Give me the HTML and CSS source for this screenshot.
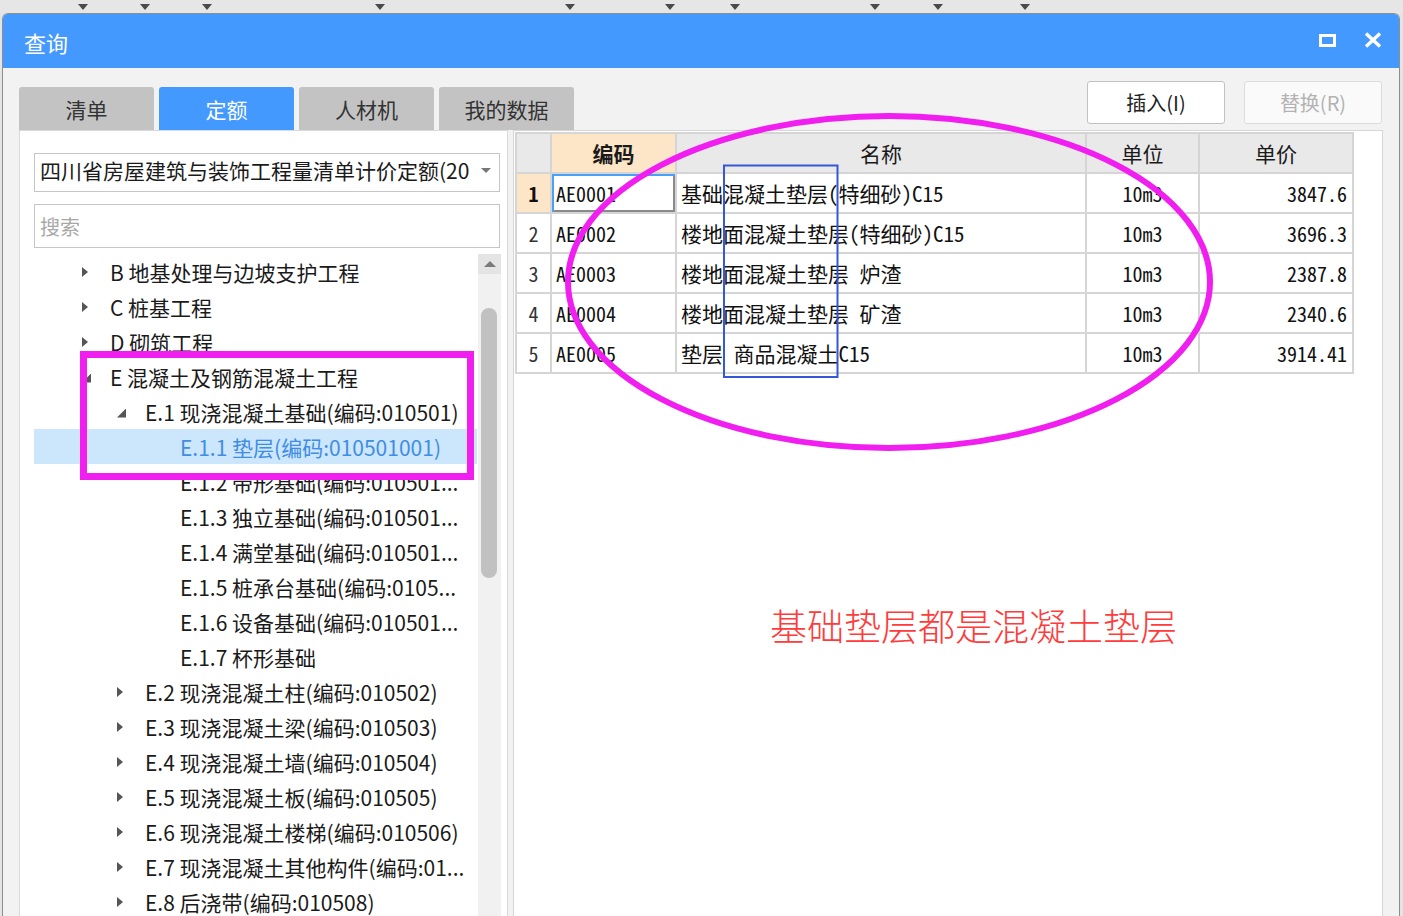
FILE: index.html
```html
<!DOCTYPE html>
<html lang="zh-CN">
<head>
<meta charset="utf-8">
<title>查询</title>
<link rel="stylesheet" href="styles.css">
</head>
<body>
<div class="strip">
  <span class="cell"><i class="tri"></i></span>
  <span class="cell"><i class="tri"></i></span>
  <span class="cell"><i class="tri"></i></span>
  <span class="cell"><i class="tri"></i></span>
  <span class="cell"><i class="tri"></i></span>
  <span class="cell"><i class="tri"></i></span>
  <span class="cell"><i class="tri"></i></span>
  <span class="cell"><i class="tri"></i></span>
  <span class="cell"><i class="tri"></i></span>
  <span class="cell"><i class="tri"></i></span>
</div>
<div class="dialog">
  <div class="titlebar">
    <span class="title">查询</span>
    <div class="winbtns">
      <span class="maxbtn"></span>
      <svg class="closebtn" width="18" height="16" viewBox="0 0 18 16"><path d="M2 1.5 L16 14.5 M16 1.5 L2 14.5" stroke="#fff" stroke-width="3.4" fill="none"/></svg>
    </div>
  </div>
  <div class="body">
    <div class="toolbar">
      <div class="tabs">
        <div class="tab">清单</div>
        <div class="tab active">定额</div>
        <div class="tab">人材机</div>
        <div class="tab">我的数据</div>
      </div>
      <div class="actions">
        <button class="btn">插入(I)</button>
        <button class="btn disabled">替换(R)</button>
      </div>
    </div>
    <div class="panels">
      <div class="left">
        <div class="select"><span class="seltext">四川省房屋建筑与装饰工程量清单计价定额(20</span><i class="caret"></i></div>
        <div class="search">搜索</div>
        <div class="treewrap">
          <div class="tree">
            <div class="row l1"><span class="tw"><i class="arr-r"></i></span><span class="label">B 地基处理与边坡支护工程</span></div>
            <div class="row l1"><span class="tw"><i class="arr-r"></i></span><span class="label">C 桩基工程</span></div>
            <div class="row l1"><span class="tw"><i class="arr-r"></i></span><span class="label">D 砌筑工程</span></div>
            <div class="row l1"><span class="tw"><i class="arr-d"></i></span><span class="label">E 混凝土及钢筋混凝土工程</span></div>
            <div class="row l2"><span class="tw"><i class="arr-d"></i></span><span class="label">E.1 现浇混凝土基础(编码:010501)</span></div>
            <div class="row l3 sel"><span class="tw"></span><span class="label">E.1.1 垫层(编码:010501001)</span></div>
            <div class="row l3"><span class="tw"></span><span class="label">E.1.2 带形基础(编码:010501...</span></div>
            <div class="row l3"><span class="tw"></span><span class="label">E.1.3 独立基础(编码:010501...</span></div>
            <div class="row l3"><span class="tw"></span><span class="label">E.1.4 满堂基础(编码:010501...</span></div>
            <div class="row l3"><span class="tw"></span><span class="label">E.1.5 桩承台基础(编码:0105...</span></div>
            <div class="row l3"><span class="tw"></span><span class="label">E.1.6 设备基础(编码:010501...</span></div>
            <div class="row l3"><span class="tw"></span><span class="label">E.1.7 杯形基础</span></div>
            <div class="row l2"><span class="tw"><i class="arr-r"></i></span><span class="label">E.2 现浇混凝土柱(编码:010502)</span></div>
            <div class="row l2"><span class="tw"><i class="arr-r"></i></span><span class="label">E.3 现浇混凝土梁(编码:010503)</span></div>
            <div class="row l2"><span class="tw"><i class="arr-r"></i></span><span class="label">E.4 现浇混凝土墙(编码:010504)</span></div>
            <div class="row l2"><span class="tw"><i class="arr-r"></i></span><span class="label">E.5 现浇混凝土板(编码:010505)</span></div>
            <div class="row l2"><span class="tw"><i class="arr-r"></i></span><span class="label">E.6 现浇混凝土楼梯(编码:010506)</span></div>
            <div class="row l2"><span class="tw"><i class="arr-r"></i></span><span class="label">E.7 现浇混凝土其他构件(编码:01...</span></div>
            <div class="row l2"><span class="tw"><i class="arr-r"></i></span><span class="label">E.8 后浇带(编码:010508)</span></div>
          </div>
          <div class="scroll">
            <div class="up"><i class="uparr"></i></div>
            <div class="thumb"></div>
          </div>
        </div>
      </div>
      <div class="right">
        <table class="grid">
          <colgroup>
            <col class="c-no"><col class="c-code"><col class="c-name"><col class="c-unit"><col class="c-price">
          </colgroup>
          <thead>
            <tr><th></th><th class="hl">编码</th><th>名称</th><th>单位</th><th>单价</th></tr>
          </thead>
          <tbody>
            <tr><td class="no cur">1</td><td class="code edit">AE0001</td><td class="name">基础混凝土垫层(特细砂)C15</td><td class="unit">10m3</td><td class="price">3847.6</td></tr>
            <tr><td class="no">2</td><td class="code">AE0002</td><td class="name">楼地面混凝土垫层(特细砂)C15</td><td class="unit">10m3</td><td class="price">3696.3</td></tr>
            <tr><td class="no">3</td><td class="code">AE0003</td><td class="name">楼地面混凝土垫层 炉渣</td><td class="unit">10m3</td><td class="price">2387.8</td></tr>
            <tr><td class="no">4</td><td class="code">AE0004</td><td class="name">楼地面混凝土垫层 矿渣</td><td class="unit">10m3</td><td class="price">2340.6</td></tr>
            <tr><td class="no">5</td><td class="code">AE0005</td><td class="name">垫层 商品混凝土C15</td><td class="unit">10m3</td><td class="price">3914.41</td></tr>
          </tbody>
        </table>
        <div class="note">基础垫层都是混凝土垫层</div>
      </div>
    </div>
  </div>
</div>
<svg class="marks" width="1403" height="916" viewBox="0 0 1403 916">
  <ellipse cx="889" cy="282" rx="321" ry="166" fill="none" stroke="#f01ff0" stroke-width="6"/>
  <rect x="724" y="165.5" width="113.5" height="211.5" fill="none" stroke="#3557d8" stroke-width="2"/>
  <rect x="83.5" y="354.5" width="387" height="122" fill="none" stroke="#f01ff0" stroke-width="7"/>
</svg>
</body>
</html>
```
FILE: styles.css
```css
html, body {
  margin: 0;
  padding: 0;
}
body {
  width: 1403px;
  height: 916px;
  overflow: hidden;
  background: #e4e4e4;
  font-family: "Noto Sans CJK SC", "Noto Sans", sans-serif;
  position: relative;
}
.strip {
  height: 13px;
  display: grid;
  grid-template-columns: 88px 62px 62px 173px 190px 100px 65px 140px 63px 87px;
  background: #e6e6e6;
}
.cell {
  display: flex;
  justify-content: flex-end;
  padding-top: 4px;
}
.tri {
  width: 0;
  height: 0;
  border-left: 5px solid transparent;
  border-right: 5px solid transparent;
  border-top: 6px solid #4a4a4a;
}
.dialog {
  margin-left: 2px;
  width: 1396px;
  height: 910px;
  border: 1px solid #8e8e8e;
  border-bottom: none;
  border-radius: 6px 6px 0 0;
  background: #f2f2f2;
  overflow: hidden;
}
.titlebar {
  height: 54px;
  background: #4499fe;
  display: flex;
  align-items: center;
  justify-content: space-between;
  padding: 0 17px 0 21px;
}
.title {
  color: #fff;
  font-size: 22px;
  line-height: 1;
  margin-top: 2px;
}
.winbtns {
  display: flex;
  align-items: center;
  gap: 28px;
  margin-top: -2px;
}
.maxbtn {
  display: block;
  width: 11px;
  height: 7px;
  border: 3px solid #fff;
}
.closebtn {
  display: block;
}
.body {
  padding: 0 16px 0 16px;
}
.toolbar {
  height: 62px;
  display: flex;
  justify-content: space-between;
  align-items: flex-start;
}
.tabs {
  display: flex;
  gap: 5px;
  margin-top: 19px;
}
.tab {
  width: 135px;
  height: 43px;
  background: #c3c3c3;
  border-radius: 3px 3px 0 0;
  color: #333;
  font-size: 21px;
  display: flex;
  align-items: center;
  justify-content: center;
}
.tab.active {
  background: #4499fe;
  color: #fff;
}
.actions {
  display: flex;
  gap: 19px;
  margin-top: 13px;
  margin-right: 1px;
}
.btn {
  width: 138px;
  height: 43px;
  background: #fff;
  border: 1px solid #c2c2c2;
  border-radius: 3px;
  font-family: "Noto Sans CJK SC", "Noto Sans", sans-serif;
  font-size: 20px;
  color: #222;
  padding: 0;
}
.btn.disabled {
  background: #fafafa;
  border-color: #dcdcdc;
  color: #b3b3b3;
}
.panels {
  display: flex;
  gap: 5px;
}
.left {
  width: 473px;
  height: 800px;
  background: #fff;
  border: 1px solid #d9d9d9;
  padding: 22px 0 0 14px;
  box-sizing: content-box;
  display: flex;
  flex-direction: column;
  flex: none;
}
.select {
  height: 37px;
  width: 459px;
  border: 1px solid #c6c6c6;
  display: flex;
  align-items: center;
  justify-content: space-between;
  padding: 0 0 0 5px;
  box-sizing: content-box;
}
.seltext {
  font-size: 21px;
  line-height: 1.3;
  color: #1a1a1a;
  white-space: nowrap;
  margin-top: -3px;
}
.caret {
  width: 0;
  height: 0;
  border-left: 5px solid transparent;
  border-right: 5px solid transparent;
  border-top: 5px solid #777;
  margin-right: 8px;
  flex: none;
  margin-left: 6px;
  margin-top: -4px;
}
.search {
  margin-top: 12px;
  height: 42px;
  width: 459px;
  padding-left: 5px;
  border: 1px solid #c6c6c6;
  display: flex;
  align-items: center;
  font-size: 20px;
  color: #a8a8a8;
}
.treewrap {
  margin-top: 6px;
  display: flex;
  flex: 1;
}
.tree {
  width: 443px;
  flex: none;
}
.row {
  height: 35px;
  display: flex;
  align-items: center;
  font-size: 21px;
  color: #1a1a1a;
  padding-right: 9px;
  box-sizing: border-box;
}
.row.l1 { padding-left: 48px; }
.row.l2 { padding-left: 83px; }
.row.l3 { padding-left: 118px; }
.row.sel {
  background: #cce6fb;
  color: #3f8de4;
}
.tw {
  width: 28px;
  flex: none;
  display: flex;
  align-items: center;
}
.label {
  white-space: nowrap;
}
.arr-r {
  display: block;
  width: 0;
  height: 0;
  border-top: 5px solid transparent;
  border-bottom: 5px solid transparent;
  border-left: 6px solid #555;
}
.arr-d {
  display: block;
  width: 9px;
  height: 9px;
  background: #555;
  clip-path: polygon(100% 0, 100% 100%, 0 100%);
  margin-top: 3px;
}
.scroll {
  width: 23px;
  margin-left: 1px;
  background: #f1f1f1;
}
.up {
  height: 20px;
  background: #e4e4e4;
  display: flex;
  align-items: center;
  justify-content: center;
}
.uparr {
  width: 0;
  height: 0;
  border-left: 6px solid transparent;
  border-right: 6px solid transparent;
  border-bottom: 6px solid #7a7a7a;
}
.thumb {
  margin: 34px 0 0 3px;
  width: 16px;
  height: 270px;
  border-radius: 8px;
  background: #c1c1c1;
}
.right {
  width: 867px;
  height: 800px;
  background: #fff;
  border: 1px solid #d6d6d6;
  padding: 1px 0 0 1px;
  box-sizing: content-box;
  flex: none;
}
.grid {
  border-collapse: collapse;
  table-layout: fixed;
  width: 837px;
  font-family: "Noto Sans Mono CJK SC", "Noto Sans CJK SC", "Liberation Mono", monospace;
  font-size: 20px;
  color: #111;
}
.c-no { width: 35px; }
.c-code { width: 125px; }
.c-name { width: 410px; }
.c-unit { width: 113px; }
.c-price { width: 154px; }
.grid th, .grid td {
  border: 2px solid #d5d5d5;
  height: 38px;
  padding: 0 4px;
  white-space: nowrap;
  overflow: hidden;
}
.grid th {
  background: #e9e9e9;
  font-family: "Noto Sans CJK SC", sans-serif;
  font-weight: normal;
  font-size: 21px;
  color: #1a1a1a;
}
.grid th.hl {
  background: #fde5c7;
  font-weight: bold;
}
.grid td.no {
  text-align: center;
  padding: 0;
  color: #333;
}
.grid td.no.cur {
  background: #fde5c7;
  font-weight: bold;
  color: #111;
}
.grid td.code {
  padding-left: 4px;
}
.grid td.edit {
  box-shadow: inset 2px 2px 0 #4aa0f5, inset -2px -2px 0 #8a8a8a;
}
.grid td.name {
  padding-left: 4px;
  font-size: 21px;
}
.grid td.unit {
  text-align: center;
}
.grid td.price {
  text-align: right;
  padding-right: 5px;
}
.note {
  margin-top: 229px;
  padding-left: 255px;
  font-size: 37px;
  color: #ff3b3b;
  font-family: "Noto Sans CJK SC", sans-serif;
  font-weight: 300;
  line-height: 44px;
}
.marks {
  position: absolute;
  left: 0;
  top: 0;
  pointer-events: none;
}
```
